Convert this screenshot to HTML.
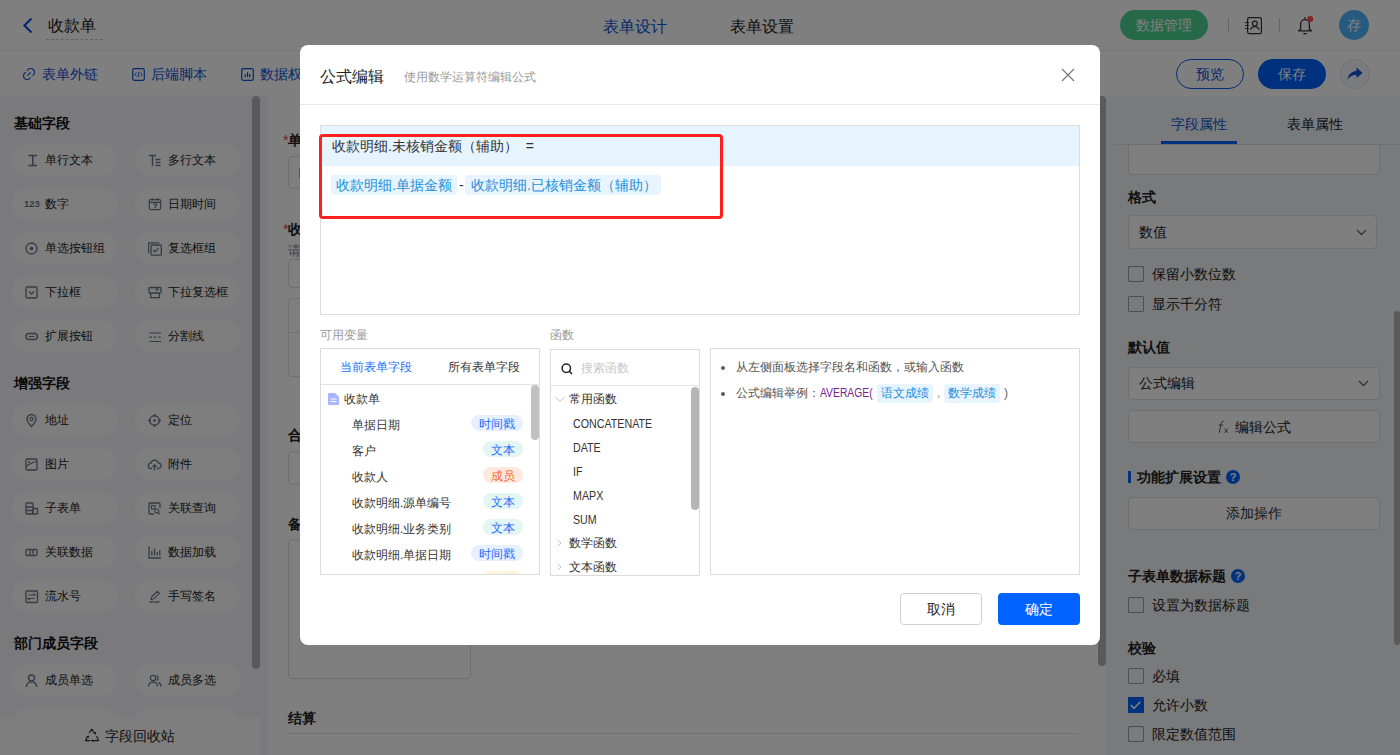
<!DOCTYPE html>
<html><head><meta charset="utf-8">
<style>
*{box-sizing:border-box}
html,body{margin:0;padding:0;width:1400px;height:755px;overflow:hidden;background:#fff}
body{font-family:"Liberation Sans",sans-serif;color:#333;position:relative}
.a{position:absolute;white-space:nowrap}
svg{display:block}
/* underlying page */
#hdr{left:0;top:0;width:1400px;height:51px;background:#fff;border-bottom:1px solid #efefef}
#tb{left:0;top:51px;width:1400px;height:45px;background:#fff}
#side{left:0;top:96px;width:268px;height:659px;background:#f4f5f8}
#center{left:268px;top:96px;width:838px;height:659px;background:#fff}
#right{left:1106px;top:96px;width:294px;height:659px;background:#f3f4f8}
.pill{position:absolute;width:105px;height:34px;border-radius:17px;background:#fdfdfd}
.pill .ic{position:absolute;left:13px;top:11px;width:13px;height:13px;overflow:visible}
.pill .t{position:absolute;left:33px;top:0;line-height:34px;font-size:12px;color:#222}
.sh{position:absolute;left:14px;font-size:14px;font-weight:bold;color:#111;line-height:20px}
.mask{left:0;top:0;width:1400px;height:755px;background:rgba(0,0,0,.5)}
#modal{left:300px;top:45px;width:800px;height:600px;background:#fff;border-radius:8px}
</style></head><body>
<!-- HEADER -->
<div id="hdr" class="a">
  <svg class="a" style="left:22px;top:17px" width="12" height="17" viewBox="0 0 12 17"><path d="M9.5 1.5 L2.5 8.5 L9.5 15.5" fill="none" stroke="#0a4fd8" stroke-width="2.2"/></svg>
  <div class="a" style="left:48px;top:15px;font-size:16px;line-height:22px;color:#222">收款单</div>
  <div class="a" style="left:46px;top:39px;width:57px;border-top:1px dashed #c8c8c8"></div>
  <div class="a" style="left:603px;top:16px;font-size:16px;line-height:22px;color:#0a52d6">表单设计</div>
  <div class="a" style="left:730px;top:16px;font-size:16px;line-height:22px;color:#222">表单设置</div>
  <div class="a" style="left:1120px;top:10px;width:88px;height:30px;border-radius:15px;background:#4dd291;color:#fff;font-size:14px;line-height:30px;text-align:center">数据管理</div>
  <div class="a" style="left:1228px;top:18px;width:1px;height:14px;background:#ccc"></div>
  <svg class="a" style="left:1244px;top:16px" width="19" height="19" viewBox="0 0 19 19"><rect x="3.6" y="1.6" width="13.8" height="16" rx="1.6" fill="none" stroke="#333" stroke-width="1.2"/><circle cx="10.8" cy="7.6" r="2.4" fill="none" stroke="#333" stroke-width="1.2"/><path d="M6.6 13.8c.5-2.2 2-3.2 4.2-3.2s3.7 1 4.2 3.2" fill="none" stroke="#333" stroke-width="1.2"/><path d="M1.2 6.5h3.6M1.2 9.5h3.6M1.2 12.5h3.6" stroke="#333" stroke-width="1.1"/></svg>
  <div class="a" style="left:1279px;top:18px;width:1px;height:14px;background:#ccc"></div>
  <svg class="a" style="left:1296px;top:15px" width="19" height="20" viewBox="0 0 19 20"><path d="M4.6 14V9A4.4 4.4 0 0 1 13.4 9V14L15.4 15.8H2.6Z" fill="none" stroke="#333" stroke-width="1.3" stroke-linejoin="round"/><path d="M7.3 18.6h3.4M9 2v1.8" stroke="#333" stroke-width="1.3"/><circle cx="14.2" cy="4" r="3" fill="#ff4d4f"/></svg>
  <div class="a" style="left:1339px;top:10px;width:30px;height:30px;border-radius:15px;background:#4fb4ff;color:#fff;font-size:14px;line-height:30px;text-align:center">存</div>
</div>
<div id="tb" class="a">
  <svg class="a" style="left:22px;top:16px" width="14" height="14" viewBox="0 0 14 14"><path d="M5.26 3.69A3.8 3.8 0 1 1 10.6 8.59" fill="none" stroke="#0a4fd8" stroke-width="1.1"/><path d="M8.66 10.48A3.8 3.8 0 1 1 3.82 5.2" fill="none" stroke="#0a4fd8" stroke-width="1.1"/><path d="M5.3 8.7L8.7 5.3" stroke="#0a4fd8" stroke-width="1.1"/></svg>
  <div class="a" style="left:42px;top:12px;font-size:14px;line-height:22px;color:#0a52d6">表单外链</div>
  <svg class="a" style="left:132px;top:17px" width="13" height="13" viewBox="0 0 13 13"><rect x=".7" y=".7" width="11.6" height="11.6" rx="1.5" fill="none" stroke="#0a4fd8" stroke-width="1.2"/><path d="M4.5 4.5 L2.8 6.5 L4.5 8.5 M8.5 4.5 L10.2 6.5 L8.5 8.5 M7.2 3.8 L5.8 9.2" fill="none" stroke="#0a4fd8" stroke-width="1"/></svg>
  <div class="a" style="left:151px;top:12px;font-size:14px;line-height:22px;color:#0a52d6">后端脚本</div>
  <svg class="a" style="left:241px;top:17px" width="13" height="13" viewBox="0 0 13 13"><rect x=".7" y=".7" width="11.6" height="11.6" rx="1.5" fill="none" stroke="#0a4fd8" stroke-width="1.2"/><path d="M4.3 9.3V6.5 M6.5 9.3V4.3 M8.7 9.3V6" stroke="#0a4fd8" stroke-width="1.2"/></svg>
  <div class="a" style="left:260px;top:12px;font-size:14px;line-height:22px;color:#0a52d6">数据权限</div>
  <div class="a" style="left:1176px;top:8px;width:68px;height:30px;border-radius:15px;border:1px solid #0a5ae6;color:#0a52d6;font-size:14px;line-height:28px;text-align:center">预览</div>
  <div class="a" style="left:1258px;top:8px;width:68px;height:30px;border-radius:15px;background:#0062ff;color:#fff;font-size:14px;line-height:30px;text-align:center">保存</div>
  <div class="a" style="left:1340px;top:8px;width:30px;height:30px;border-radius:15px;border:1px solid #dde3f0;background:#f3f6fc"></div>
  <svg class="a" style="left:1346px;top:15px" width="18" height="16" viewBox="0 0 18 16"><path d="M10.5 1.5 L16.5 7 L10.5 12 V9 C6 9 3.5 10.5 1.5 14 C2 9 5 5.5 10.5 5 Z" fill="#0a52d6"/></svg>
</div>
<div id="side" class="a">
<div class="sh" style="top:17px">基础字段</div>
<div class="pill" style="left:12px;top:47px"><svg class="ic" viewBox="0 0 13 13"><path d="M3.5 1.5h8.5M7.75 1.5v10M3.5 11.5h8.5" stroke="#6c758d" stroke-width="1.5" fill="none"/></svg><div class="t">单行文本</div></div>
<div class="pill" style="left:135px;top:47px"><svg class="ic" viewBox="0 0 13 13"><path d="M1 1.5h7M4.5 1.5v10.5M7.5 5.5h5M7.5 8.5h5M7.5 11.5h5" stroke="#6c758d" stroke-width="1.4" fill="none"/></svg><div class="t">多行文本</div></div>
<div class="pill" style="left:12px;top:91px"><svg class="ic" viewBox="0 0 13 13"><text x="-1" y="8.6" font-size="9.5" font-weight="bold" fill="#6c758d" font-family="Liberation Sans">123</text></svg><div class="t">数字</div></div>
<div class="pill" style="left:135px;top:91px"><svg class="ic" viewBox="0 0 13 13"><rect x="1.3" y="1.6" width="11.4" height="10" rx="1.5" stroke="#6c758d" stroke-width="1.2" fill="none"/><path d="M1.3 4.4h11.4M4.3 0v2.6M9.7 0v2.6M5.3 6.2h3.3L6.9 10" stroke="#6c758d" stroke-width="1.2" fill="none"/></svg><div class="t">日期时间</div></div>
<div class="pill" style="left:12px;top:135px"><svg class="ic" viewBox="0 0 13 13"><circle cx="6.5" cy="6.5" r="5.5" stroke="#6c758d" stroke-width="1.3" fill="none"/><circle cx="6.5" cy="6.5" r="1.8" fill="#6c758d"/></svg><div class="t">单选按钮组</div></div>
<div class="pill" style="left:135px;top:135px"><svg class="ic" viewBox="0 0 13 13"><path d="M.6 11V.8H11.4" stroke="#6c758d" stroke-width="1.2" fill="none"/><rect x="3" y="3" width="10.3" height="10.2" rx=".8" stroke="#6c758d" stroke-width="1.3" fill="none"/><path d="M5 8l2 2 3.5-3.8" stroke="#6c758d" stroke-width="1.2" fill="none"/></svg><div class="t">复选框组</div></div>
<div class="pill" style="left:12px;top:179px"><svg class="ic" viewBox="0 0 13 13"><rect x="1" y="1" width="11" height="11" rx="1.2" stroke="#6c758d" stroke-width="1.3" fill="none"/><path d="M4 5.5l2.5 2.5 2.5-2.5" stroke="#6c758d" stroke-width="1.3" fill="none"/></svg><div class="t">下拉框</div></div>
<div class="pill" style="left:135px;top:179px"><svg class="ic" viewBox="0 0 13 13"><rect x="1" y="1.5" width="12" height="5.5" rx="1" stroke="#6c758d" stroke-width="1.3" fill="none"/><path d="M2.6 7v4.7h8.8V7M7.6 2.6l1.4 1.6 1.4-1.6" stroke="#6c758d" stroke-width="1.3" fill="none"/></svg><div class="t">下拉复选框</div></div>
<div class="pill" style="left:12px;top:223px"><svg class="ic" viewBox="0 0 13 13"><rect x="1" y="3.5" width="11.5" height="6" rx="3" stroke="#6c758d" stroke-width="1.4" fill="none"/><path d="M4 6.5h5.5" stroke="#6c758d" stroke-width="1.2"/></svg><div class="t">扩展按钮</div></div>
<div class="pill" style="left:135px;top:223px"><svg class="ic" viewBox="0 0 13 13"><path d="M1.5 3h11.5M1.5 11.5h11.5" stroke="#6c758d" stroke-width="1.2"/><path d="M1.5 7.2h2.5M5.8 7.2h2.5M10.3 7.2h2.5" stroke="#6c758d" stroke-width="1.2"/></svg><div class="t">分割线</div></div>
<div class="sh" style="top:277px">增强字段</div>
<div class="pill" style="left:12px;top:307px"><svg class="ic" viewBox="0 0 13 13"><path d="M6.5 12.5C3.5 9.5 2 7.3 2 5a4.5 4.5 0 0 1 9 0c0 2.3-1.5 4.5-4.5 7.5z" stroke="#6c758d" stroke-width="1.3" fill="none"/><circle cx="6.5" cy="5" r="1.6" stroke="#6c758d" stroke-width="1.2" fill="none"/></svg><div class="t">地址</div></div>
<div class="pill" style="left:135px;top:307px"><svg class="ic" viewBox="0 0 13 13"><circle cx="6.5" cy="6.5" r="4.8" stroke="#6c758d" stroke-width="1.3" fill="none"/><circle cx="6.5" cy="6.5" r="1.3" fill="#6c758d"/><path d="M6.5 0v3M6.5 10v3M0 6.5h3M10 6.5h3" stroke="#6c758d" stroke-width="1.3"/></svg><div class="t">定位</div></div>
<div class="pill" style="left:12px;top:351px"><svg class="ic" viewBox="0 0 13 13"><rect x="1" y="1" width="11" height="11" rx="1.2" stroke="#6c758d" stroke-width="1.3" fill="none"/><path d="M1 8.5c3-2.5 5-3 7-4l4-1.5" stroke="#6c758d" stroke-width="1.2" fill="none"/><circle cx="4" cy="4" r="1" fill="#6c758d"/></svg><div class="t">图片</div></div>
<div class="pill" style="left:135px;top:351px"><svg class="ic" viewBox="0 0 13 13"><path d="M4 10.5H3.2a2.7 2.7 0 0 1-.3-5.4 3.7 3.7 0 0 1 7.2-.3 2.7 2.7 0 0 1 .2 5.7H9" stroke="#6c758d" stroke-width="1.3" fill="none"/><path d="M6.5 12.5V7M4.5 9l2-2 2 2" stroke="#6c758d" stroke-width="1.3" fill="none"/></svg><div class="t">附件</div></div>
<div class="pill" style="left:12px;top:395px"><svg class="ic" viewBox="0 0 13 13"><path d="M8 12H2a1 1 0 0 1-1-1V2a1 1 0 0 1 1-1h5a1 1 0 0 1 1 1v10zM1 5h7M1 8.5h7" stroke="#6c758d" stroke-width="1.3" fill="none"/><rect x="8" y="6.5" width="4.5" height="5.5" rx=".8" stroke="#6c758d" stroke-width="1.3" fill="none"/></svg><div class="t">子表单</div></div>
<div class="pill" style="left:135px;top:395px"><svg class="ic" viewBox="0 0 13 13"><path d="M6 12H2a1 1 0 0 1-1-1V2a1 1 0 0 1 1-1h9a1 1 0 0 1 1 1v4" stroke="#6c758d" stroke-width="1.3" fill="none"/><rect x="3.5" y="3.5" width="3.5" height="3.5" stroke="#6c758d" stroke-width="1.1" fill="none"/><circle cx="8.8" cy="9" r="2" stroke="#6c758d" stroke-width="1.1" fill="none"/><path d="M10.2 10.4l2 2" stroke="#6c758d" stroke-width="1.2"/></svg><div class="t">关联查询</div></div>
<div class="pill" style="left:12px;top:439px"><svg class="ic" viewBox="0 0 13 13"><path d="M5 9.5H2a1 1 0 0 1-1-1v-4a1 1 0 0 1 1-1h5a1 1 0 0 1 1 1v4" stroke="#6c758d" stroke-width="1.3" fill="none"/><path d="M8 3.5h3a1 1 0 0 1 1 1v4a1 1 0 0 1-1 1H6a1 1 0 0 1-1-1v-4" stroke="#6c758d" stroke-width="1.3" fill="none"/></svg><div class="t">关联数据</div></div>
<div class="pill" style="left:135px;top:439px"><svg class="ic" viewBox="0 0 13 13"><path d="M1 .5v11.5h12M3.8 9.5V5M6.5 9.5V2.5M9.2 9.5V6M11.8 9.5V4" stroke="#6c758d" stroke-width="1.3" fill="none"/></svg><div class="t">数据加载</div></div>
<div class="pill" style="left:12px;top:483px"><svg class="ic" viewBox="0 0 13 13"><rect x="1" y="1" width="11.5" height="11.5" rx="1" stroke="#6c758d" stroke-width="1.3" fill="none"/><path d="M3.5 5h6.5l-1.6-1.5M9.5 8.5H3l1.6 1.5" stroke="#6c758d" stroke-width="1.1" fill="none"/></svg><div class="t">流水号</div></div>
<div class="pill" style="left:135px;top:483px"><svg class="ic" viewBox="0 0 13 13"><path d="M3 9.5l.8-2.7 5.5-5.5 2 2L5.8 8.8zM1.5 12.5c2-1.2 3-1.2 4.5-.5s3 .5 5.5-.5" stroke="#6c758d" stroke-width="1.2" fill="none"/></svg><div class="t">手写签名</div></div>
<div class="sh" style="top:537px">部门成员字段</div>
<div class="pill" style="left:12px;top:567px"><svg class="ic" viewBox="0 0 13 13"><circle cx="6.5" cy="4" r="3" stroke="#6c758d" stroke-width="1.4" fill="none"/><path d="M1.3 13a5.2 5.2 0 0 1 10.4 0" stroke="#6c758d" stroke-width="1.4" fill="none"/></svg><div class="t">成员单选</div></div>
<div class="pill" style="left:135px;top:567px"><svg class="ic" viewBox="0 0 13 13"><circle cx="5" cy="4" r="2.7" stroke="#6c758d" stroke-width="1.3" fill="none"/><path d="M.5 12.5a4.5 4.5 0 0 1 9 0M8.5 1.5a2.7 2.7 0 0 1 0 5M10.5 8.3a4.5 4.5 0 0 1 2.5 4.2" stroke="#6c758d" stroke-width="1.3" fill="none"/></svg><div class="t">成员多选</div></div>
<div class="pill" style="left:12px;top:611px"></div><div class="pill" style="left:135px;top:611px"></div>
<div class="a" style="left:252px;top:0;width:8px;height:573px;border-radius:4px;background:#b4b4b4"></div>
<div class="a" style="left:0;top:621px;width:260px;height:38px;background:#fcfcfd"><svg class="a" style="left:85px;top:11px" width="15" height="14" viewBox="0 0 15 14"><path d="M4.2 4.9L6.8 1.2L9.6 5.2M11.6 7.9L13.5 12.6H7.6M5.2 12.6H.6L2.6 8.2" stroke="#222" stroke-width="1.1" fill="none" stroke-linejoin="round"/><path d="M8.3 5.6l2.6.9.2-2.7z" fill="#222"/><path d="M7.9 11.2v2.8l-2.2-1.4z" fill="#222"/><path d="M1.2 8.3l2.7-.6.4 2.3z" fill="#222"/></svg><div class="a" style="left:105px;top:8px;font-size:14px;line-height:22px;color:#222">字段回收站</div></div>
</div>
<div id="center" class="a">
  <div class="a" style="left:15px;top:34px;font-size:14px;line-height:20px;font-weight:bold;color:#222"><span style="color:#e53935;font-weight:normal">*</span>单据编号</div>
  <div class="a" style="left:20px;top:60px;width:300px;height:33px;border:1px solid #dcdcdc;border-radius:4px;background:#fff"></div>
  <div class="a" style="left:31px;top:72px;width:2px;height:10px;background:#f0a060"></div>
  <div class="a" style="left:15px;top:123px;font-size:14px;line-height:20px;font-weight:bold;color:#222"><span style="color:#e53935;font-weight:normal">*</span>收款明细</div>
  <div class="a" style="left:20px;top:145px;font-size:13px;line-height:20px;color:#888">请选择</div>
  <div class="a" style="left:20px;top:163px;width:300px;height:29px;border:1px solid #dcdcdc;border-radius:4px"></div>
  <div class="a" style="left:20px;top:202px;width:600px;height:79px;border:1px solid #e0e0e0;border-radius:4px"></div>
  <div class="a" style="left:20px;top:236px;width:600px;height:1px;background:#e0e0e0"></div>
  <div class="a" style="left:20px;top:329px;font-size:14px;line-height:20px;font-weight:bold;color:#222">合计金额</div>
  <div class="a" style="left:20px;top:355px;width:300px;height:34px;border:1px solid #dcdcdc;border-radius:4px"></div>
  <div class="a" style="left:20px;top:418px;font-size:14px;line-height:20px;font-weight:bold;color:#222">备注</div>
  <div class="a" style="left:20px;top:443px;width:183px;height:140px;border:1px solid #dcdcdc;border-radius:4px"></div>
  <div class="a" style="left:20px;top:612px;font-size:14px;line-height:20px;font-weight:bold;color:#222">结算</div>
  <div class="a" style="left:20px;top:637px;width:790px;height:1px;background:#e3e3e3"></div>
  <div class="a" style="left:830px;top:0;width:8px;height:570px;border-radius:4px;background:#b4b4b4"></div>
</div>
<div id="right" class="a">
<div class="a" style="left:22px;top:24px;width:252px;height:55px;border:1px solid #dedede;border-radius:4px;background:#fff"></div>
<div class="a" style="left:0;top:0;width:294px;height:49px;background:#f3f4f8;border-bottom:1px solid #dedede"></div>
<div class="a" style="left:0;top:0;width:8px;height:50px;background:#f3f4f8"></div>
<div class="a" style="left:65px;top:18px;font-size:14px;line-height:20px;color:#0a52d6">字段属性</div>
<div class="a" style="left:55px;top:45px;width:76px;height:3px;background:#0062ff"></div>
<div class="a" style="left:181px;top:18px;font-size:14px;line-height:20px;color:#222">表单属性</div>
<div class="a" style="left:22px;top:91px;font-size:14px;line-height:20px;font-weight:bold;color:#222">格式</div>
<div class="a" style="left:22px;top:119px;width:249px;height:34px;border:1px solid #dedede;border-radius:4px;background:#fff"></div>
<div class="a" style="left:33px;top:126px;font-size:14px;line-height:20px;color:#222">数值</div>
<svg class="a" style="left:250px;top:133px" width="11" height="7" viewBox="0 0 11 7"><path d="M1 1l4.5 4.5L10 1" stroke="#666" stroke-width="1.3" fill="none"/></svg>
<div class="a" style="left:22px;top:170px;width:16px;height:16px;border:1px solid #979dab;border-radius:1px;background:transparent"></div>
<div class="a" style="left:46px;top:167.5px;font-size:14px;line-height:20px;color:#222">保留小数位数</div>
<div class="a" style="left:22px;top:200px;width:16px;height:16px;border:1px solid #979dab;border-radius:1px;background:transparent"></div>
<div class="a" style="left:46px;top:197.5px;font-size:14px;line-height:20px;color:#222">显示千分符</div>
<div class="a" style="left:22px;top:241px;font-size:14px;line-height:20px;font-weight:bold;color:#222">默认值</div>
<div class="a" style="left:22px;top:270.5px;width:252px;height:33px;border:1px solid #dedede;border-radius:4px;background:#fff"></div>
<div class="a" style="left:33px;top:277px;font-size:14px;line-height:20px;color:#222">公式编辑</div>
<svg class="a" style="left:252px;top:284px" width="11" height="7" viewBox="0 0 11 7"><path d="M1 1l4.5 4.5L10 1" stroke="#666" stroke-width="1.3" fill="none"/></svg>
<div class="a" style="left:22px;top:314px;width:252px;height:33px;border:1px solid #dedede;border-radius:4px;background:#fff"></div>
<svg class="a" style="left:111px;top:324px" width="13" height="14" viewBox="0 0 13 14"><path d="M2.2 12.8L4.3 3.2C4.7 1.4 5.8.9 7.2 1.3" stroke="#555" stroke-width="0.95" fill="none"/><path d="M1.5 5.1H6.2" stroke="#555" stroke-width="0.9"/><path d="M7.6 8.6l3.4 4.2M11 8.6l-3.4 4.2" stroke="#555" stroke-width="1"/></svg>
<div class="a" style="left:129px;top:320.5px;font-size:14px;line-height:20px;color:#222">编辑公式</div>
<div class="a" style="left:22px;top:375px;width:3px;height:12px;background:#0062ff"></div>
<div class="a" style="left:31px;top:371px;font-size:14px;line-height:20px;font-weight:bold;color:#222">功能扩展设置</div>
<div class="a" style="left:120px;top:374px;width:14px;height:14px;border-radius:7px;background:#0062ff;color:#fff;font-size:11px;line-height:14px;text-align:center;font-weight:bold">?</div>
<div class="a" style="left:22px;top:400.5px;width:252px;height:33px;border:1px solid #dedede;border-radius:4px;background:#fff;font-size:14px;line-height:31px;text-align:center;color:#333">添加操作</div>
<div class="a" style="left:22px;top:470px;font-size:14px;line-height:20px;font-weight:bold;color:#222">子表单数据标题</div>
<div class="a" style="left:125px;top:473px;width:14px;height:14px;border-radius:7px;background:#0062ff;color:#fff;font-size:11px;line-height:14px;text-align:center;font-weight:bold">?</div>
<div class="a" style="left:22px;top:501px;width:16px;height:16px;border:1px solid #979dab;border-radius:1px;background:transparent"></div>
<div class="a" style="left:46px;top:498.5px;font-size:14px;line-height:20px;color:#222">设置为数据标题</div>
<div class="a" style="left:22px;top:542px;font-size:14px;line-height:20px;font-weight:bold;color:#222">校验</div>
<div class="a" style="left:22px;top:572px;width:16px;height:16px;border:1px solid #979dab;border-radius:1px;background:transparent"></div>
<div class="a" style="left:46px;top:569.5px;font-size:14px;line-height:20px;color:#222">必填</div>
<div class="a" style="left:22px;top:601px;width:16px;height:16px;border-radius:1px;background:#0062ff"><svg width="16" height="16" viewBox="0 0 16 16"><path d="M2.8 8l3.2 3.4 6.3-6.6" stroke="#fff" stroke-width="1.6" fill="none"/></svg></div>
<div class="a" style="left:46px;top:599px;font-size:14px;line-height:20px;color:#222">允许小数</div>
<div class="a" style="left:22px;top:630px;width:16px;height:16px;border:1px solid #979dab;border-radius:1px;background:transparent"></div>
<div class="a" style="left:46px;top:628px;font-size:14px;line-height:20px;color:#222">限定数值范围</div>
<div class="a" style="left:288px;top:215px;width:6px;height:334px;border-radius:3px;background:#b4b4b4"></div>
</div>

<div class="a mask"></div>
<div id="modal" class="a">
<div class="a" style="left:20px;top:21px;font-size:16px;line-height:22px;color:#222">公式编辑</div>
<div class="a" style="left:104px;top:22px;font-size:12px;line-height:20px;color:#999">使用数学运算符编辑公式</div>
<svg class="a" style="left:761px;top:23px" width="14" height="14" viewBox="0 0 14 14"><path d="M1 1L13 13M13 1L1 13" stroke="#777" stroke-width="1.2"/></svg>
<div class="a" style="left:0px;top:59px;width:800px;height:1px;background:#e8e8e8"></div>
<div class="a" style="left:20px;top:80px;width:760px;height:190px;border:1px solid #dcdcdc;background:#fff"></div>
<div class="a" style="left:21px;top:81px;width:758px;height:40px;background:#e6f4ff"></div>
<div class="a" style="left:32px;top:91px;font-size:14px;line-height:20px;color:#333">收款明细.未核销金额（辅助）&nbsp;&nbsp;=</div>
<div class="a" style="left:31px;top:130px;width:126px;height:20px;border-radius:3px;background:#e8f4ff"></div>
<div class="a" style="left:36px;top:130px;font-size:14px;line-height:20px;color:#1d8fd8">收款明细.单据金额</div>
<div class="a" style="left:159px;top:130px;font-size:14px;line-height:20px;color:#333">-</div>
<div class="a" style="left:165px;top:130px;width:196px;height:20px;border-radius:3px;background:#e8f4ff"></div>
<div class="a" style="left:171px;top:130px;font-size:14px;line-height:20px;color:#1d8fd8">收款明细.已核销金额（辅助）</div>
<div class="a" style="left:19px;top:89px;width:404px;height:85px;border:3px solid #ff1f1f;border-radius:4px"></div>
<div class="a" style="left:20px;top:280px;font-size:12px;line-height:20px;color:#999">可用变量</div>
<div class="a" style="left:250px;top:280px;font-size:12px;line-height:20px;color:#999">函数</div>
<div class="a" style="left:20px;top:303px;width:220px;height:227px;border:1px solid #dcdcdc;background:#fff;overflow:hidden">
<div class="a" style="left:19px;top:8px;font-size:12px;line-height:20px;color:#1f6bff">当前表单字段</div>
<div class="a" style="left:127px;top:8px;font-size:12px;line-height:20px;color:#333">所有表单字段</div>
<div class="a" style="left:0px;top:35px;width:220px;height:1px;background:#e3e3e3"></div>
<svg class="a" style="left:7px;top:44px" width="11" height="12" viewBox="0 0 11 12"><path d="M0 1a1 1 0 0 1 1-1h6l4 4v7a1 1 0 0 1-1 1H1a1 1 0 0 1-1-1z" fill="#a7b6ff"/><path d="M2.5 6h6M2.5 8.5h6" stroke="#fff" stroke-width="1"/></svg>
<div class="a" style="left:23px;top:40px;font-size:12px;line-height:20px;color:#333">收款单</div>
<div class="a" style="left:31px;top:66px;font-size:12px;line-height:20px;color:#333">单据日期</div>
<div class="a" style="left:150px;top:66px;width:52px;height:16px;border-radius:8px;background:#e7f0ff;color:#1f6bff;font-size:12px;line-height:18px;text-align:center">时间戳</div>
<div class="a" style="left:31px;top:92px;font-size:12px;line-height:20px;color:#333">客户</div>
<div class="a" style="left:162px;top:92px;width:40px;height:16px;border-radius:8px;background:#e3f6f4;color:#1f6bff;font-size:12px;line-height:18px;text-align:center">文本</div>
<div class="a" style="left:31px;top:118px;font-size:12px;line-height:20px;color:#333">收款人</div>
<div class="a" style="left:162px;top:118px;width:40px;height:16px;border-radius:8px;background:#ffe9df;color:#f36b2c;font-size:12px;line-height:18px;text-align:center">成员</div>
<div class="a" style="left:31px;top:144px;font-size:12px;line-height:20px;color:#333">收款明细.源单编号</div>
<div class="a" style="left:162px;top:144px;width:40px;height:16px;border-radius:8px;background:#e3f6f4;color:#1f6bff;font-size:12px;line-height:18px;text-align:center">文本</div>
<div class="a" style="left:31px;top:170px;font-size:12px;line-height:20px;color:#333">收款明细.业务类别</div>
<div class="a" style="left:162px;top:170px;width:40px;height:16px;border-radius:8px;background:#e3f6f4;color:#1f6bff;font-size:12px;line-height:18px;text-align:center">文本</div>
<div class="a" style="left:31px;top:196px;font-size:12px;line-height:20px;color:#333">收款明细.单据日期</div>
<div class="a" style="left:150px;top:196px;width:52px;height:16px;border-radius:8px;background:#e7f0ff;color:#1f6bff;font-size:12px;line-height:18px;text-align:center">时间戳</div>
<div class="a" style="left:31px;top:222px;font-size:12px;line-height:20px;color:#333">收款明细.单据金额</div>
<div class="a" style="left:162px;top:222px;width:40px;height:16px;border-radius:8px;background:#fff4d9;color:#e6a100;font-size:12px;line-height:18px;text-align:center">数字</div>
<div class="a" style="left:210px;top:36px;width:8px;height:55px;border-radius:4px;background:#c1c1c1"></div>
</div>
<div class="a" style="left:250px;top:304px;width:150px;height:227px;border:1px solid #dcdcdc;background:#fff;overflow:hidden">
<svg class="a" style="left:10px;top:13px" width="12" height="12" viewBox="0 0 12 12"><circle cx="5.3" cy="5.3" r="4.2" stroke="#222" stroke-width="1.5" fill="none"/><path d="M8.3 8.3l2.6 2.6" stroke="#222" stroke-width="1.5"/></svg>
<div class="a" style="left:30px;top:8px;font-size:12px;line-height:20px;color:#c8c8c8">搜索函数</div>
<div class="a" style="left:0px;top:35px;width:150px;height:1px;background:#e3e3e3"></div>
<svg class="a" style="left:3px;top:45px" width="12" height="8" viewBox="0 0 12 8"><path d="M1 1.5l5 5 5-5" stroke="#c0c4cc" stroke-width="1" fill="none"/></svg>
<div class="a" style="left:18px;top:39px;font-size:12px;line-height:20px;color:#333">常用函数</div>
<div class="a" style="left:22px;top:64px;font-size:12px;line-height:20px;color:#333;transform:scaleX(.89);transform-origin:0 0">CONCATENATE</div>
<div class="a" style="left:22px;top:88px;font-size:12px;line-height:20px;color:#333;transform:scaleX(.89);transform-origin:0 0">DATE</div>
<div class="a" style="left:22px;top:112px;font-size:12px;line-height:20px;color:#333;transform:scaleX(.89);transform-origin:0 0">IF</div>
<div class="a" style="left:22px;top:136px;font-size:12px;line-height:20px;color:#333;transform:scaleX(.89);transform-origin:0 0">MAPX</div>
<div class="a" style="left:22px;top:160px;font-size:12px;line-height:20px;color:#333;transform:scaleX(.89);transform-origin:0 0">SUM</div>
<svg class="a" style="left:6px;top:189px" width="5" height="8" viewBox="0 0 5 8"><path d="M1 1l3 3-3 3" stroke="#c0c4cc" stroke-width="1" fill="none"/></svg>
<div class="a" style="left:18px;top:183px;font-size:12px;line-height:20px;color:#333">数学函数</div>
<svg class="a" style="left:6px;top:213px" width="5" height="8" viewBox="0 0 5 8"><path d="M1 1l3 3-3 3" stroke="#c0c4cc" stroke-width="1" fill="none"/></svg>
<div class="a" style="left:18px;top:207px;font-size:12px;line-height:20px;color:#333">文本函数</div>
<div class="a" style="left:140px;top:37px;width:8px;height:123px;border-radius:4px;background:#b5b5b5"></div>
</div>
<div class="a" style="left:410px;top:303px;width:370px;height:227px;border:1px solid #dcdcdc;background:#fff"></div>
<div class="a" style="left:421px;top:321px;width:4px;height:4px;border-radius:2px;background:#555d6b"></div>
<div class="a" style="left:436px;top:312px;font-size:12px;line-height:20px;color:#555">从左侧面板选择字段名和函数，或输入函数</div>
<div class="a" style="left:421px;top:347px;width:4px;height:4px;border-radius:2px;background:#555d6b"></div>
<div class="a" style="left:436px;top:338px;font-size:12px;line-height:20px;color:#555">公式编辑举例：</div>
<div class="a" style="left:520px;top:338px;font-size:12px;line-height:20px;color:#7a1c8c;transform:scaleX(.86);transform-origin:0 0">AVERAGE(</div>
<div class="a" style="left:577px;top:338.5px;width:56px;height:19px;border-radius:3px;background:#e8f4ff;color:#1d8fd8;font-size:12px;line-height:19px;text-align:center">语文成绩</div>
<div class="a" style="left:637px;top:338px;font-size:12px;line-height:20px;color:#999">,</div>
<div class="a" style="left:644px;top:338.5px;width:56px;height:19px;border-radius:3px;background:#e8f4ff;color:#1d8fd8;font-size:12px;line-height:19px;text-align:center">数学成绩</div>
<div class="a" style="left:704px;top:338px;font-size:12px;line-height:20px;color:#666">)</div>
<div class="a" style="left:600px;top:548px;width:82px;height:32px;border:1px solid #d0d0d0;border-radius:4px;background:#fff;color:#222;font-size:14px;line-height:30px;text-align:center">取消</div>
<div class="a" style="left:698px;top:548px;width:82px;height:32px;border-radius:4px;background:#0062ff;color:#fff;font-size:14px;line-height:32px;text-align:center">确定</div>
</div>
</body></html>
